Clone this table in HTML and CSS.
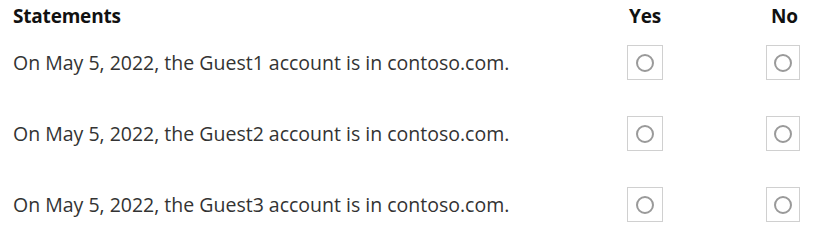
FILE: index.html
```html
<!DOCTYPE html>
<html lang="en">
<head>
    <meta charset="UTF-8">
    <title>Statements</title>
    <link rel="stylesheet" href="styles.css">
</head>
<body>
    <div class="quiz">
        <div class="head">
            <span>Statements</span>
            <span class="col-yes">Yes</span>
            <span class="col-no">No</span>
        </div>
        <div class="row">
            <span class="text">On May 5, 2022, the Guest1 account is in contoso.com.</span>
            <span class="box"><span class="radio"></span></span>
            <span class="box box-no"><span class="radio"></span></span>
        </div>
        <div class="row">
            <span class="text">On May 5, 2022, the Guest2 account is in contoso.com.</span>
            <span class="box"><span class="radio"></span></span>
            <span class="box box-no"><span class="radio"></span></span>
        </div>
        <div class="row">
            <span class="text">On May 5, 2022, the Guest3 account is in contoso.com.</span>
            <span class="box"><span class="radio"></span></span>
            <span class="box box-no"><span class="radio"></span></span>
        </div>
    </div>
</body>
</html>
```

FILE: styles.css
```css
body {
    margin: 0;
    background: #ffffff;
    font-family: "Open Sans", Arial, sans-serif;
}
.quiz {
    padding-left: 13px;
}
.head {
    display: grid;
    grid-template-columns: 616px 142px 1fr;
    height: 45px;
    padding-top: 3px;
    box-sizing: border-box;
    font-size: 19px;
    font-weight: 700;
    color: #111;
    letter-spacing: -0.2px;
}
.row {
    display: grid;
    grid-template-columns: 614px 139px 1fr;
    align-items: center;
    height: 35px;
    margin-bottom: 36px;
}
.row:last-child {
    margin-bottom: 0;
}
.text {
    font-size: 19.5px;
    color: #333;
    white-space: nowrap;
}
.box {
    width: 36px;
    height: 35px;
    box-sizing: border-box;
    border: 1px solid #d0d0d0;
    display: flex;
    align-items: center;
    justify-content: center;
}
.box-no {
    width: 34px;
}
.radio {
    width: 18px;
    height: 18px;
    box-sizing: border-box;
    border: 2px solid #9a9a9a;
    border-radius: 50%;
}
```
